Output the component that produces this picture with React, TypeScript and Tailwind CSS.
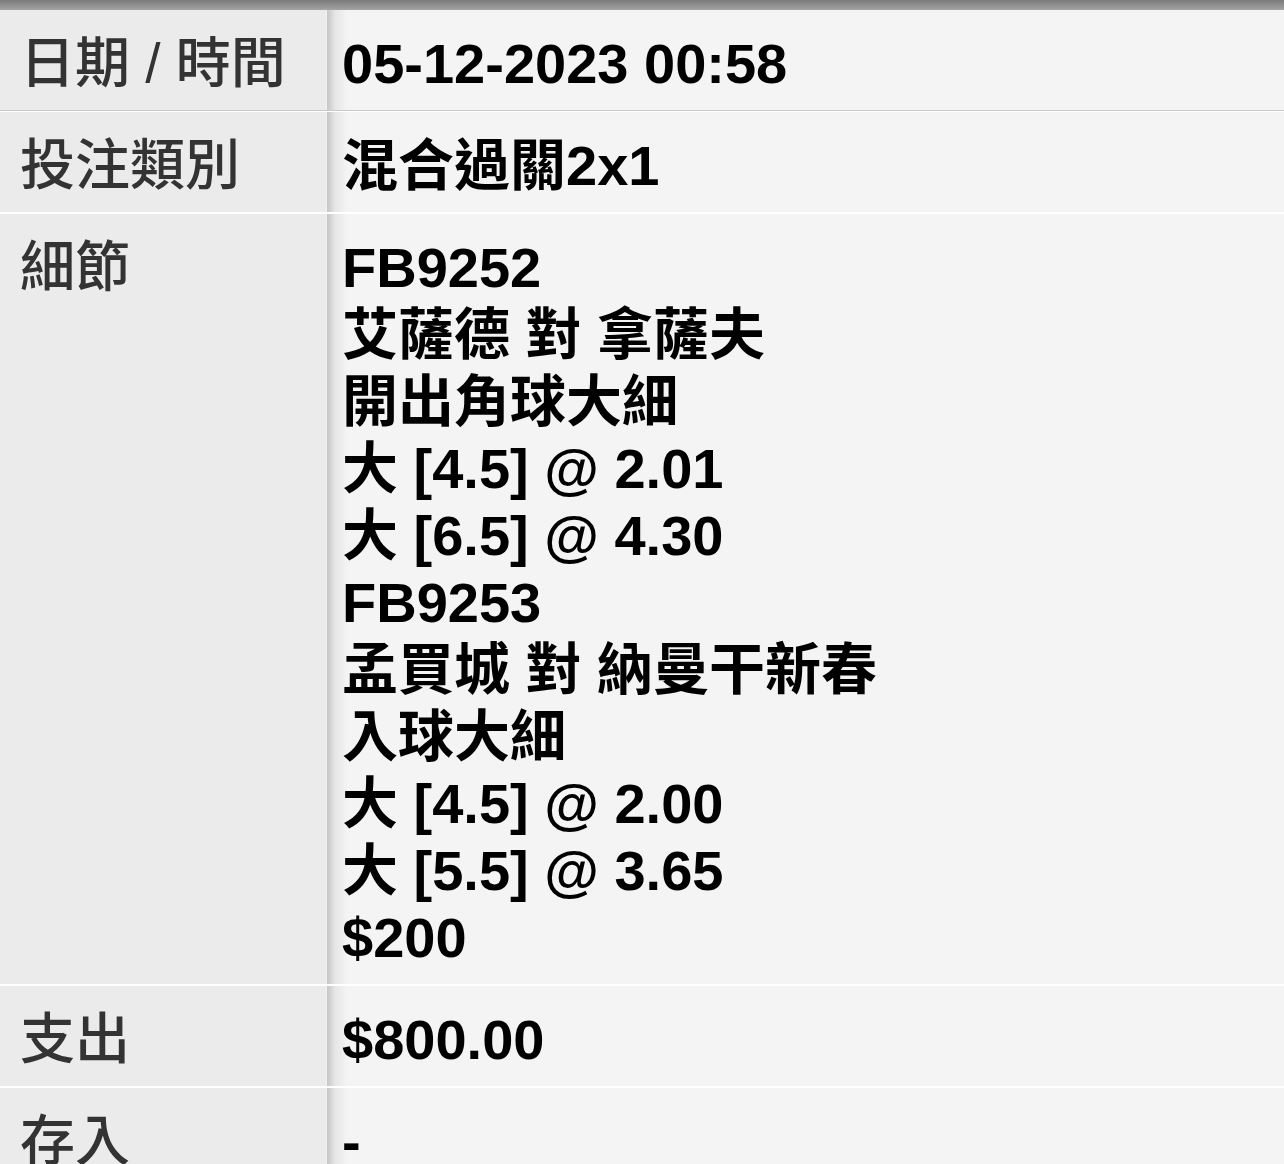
const rows: { label: string; lines: string[] }[] = [
  { label: "日期 / 時間", lines: ["05-12-2023 00:58"] },
  { label: "投注類別", lines: ["混合過關2x1"] },
  {
    label: "細節",
    lines: [
      "FB9252",
      "艾薩德 對 拿薩夫",
      "開出角球大細",
      "大 [4.5] @ 2.01",
      "大 [6.5] @ 4.30",
      "FB9253",
      "孟買城 對 納曼干新春",
      "入球大細",
      "大 [4.5] @ 2.00",
      "大 [5.5] @ 3.65",
      "$200",
    ],
  },
  { label: "支出", lines: ["$800.00"] },
  { label: "存入", lines: ["-"] },
];

export default function App() {
  return (
    <div
      className="w-[1284px] h-[1164px] overflow-hidden bg-[#f4f4f4]"
      style={{ fontFamily: '"Liberation Sans", "Noto Sans CJK TC", sans-serif' }}
    >
      <div className="h-[10px] bg-gradient-to-b from-[#7a7a7a] to-[#a4a4a4]" />
      {rows.map((row, i) => (
        <div
          key={row.label}
          className={`flex ${i > 0 ? "border-t border-white" : ""} border-b border-[#c9c9c9]`}
        >
          <div className="w-[327px] shrink-0 bg-[#ebebeb] border-r border-[#f2f2f2] pl-[20px] pt-5 pb-[13px] text-[55px] leading-[67px] font-medium text-[#333333]">
            {row.label}
          </div>
          <div className="flex-1 bg-[linear-gradient(to_right,#c4c4c4,#e6e6e6_8px,#f4f4f4_20px)] pl-[15px] pt-5 pb-[13px] text-[56px] leading-[67px] font-bold text-black">
            {row.lines.map((l) => (
              <div key={l}>{l}</div>
            ))}
          </div>
        </div>
      ))}
    </div>
  );
}
